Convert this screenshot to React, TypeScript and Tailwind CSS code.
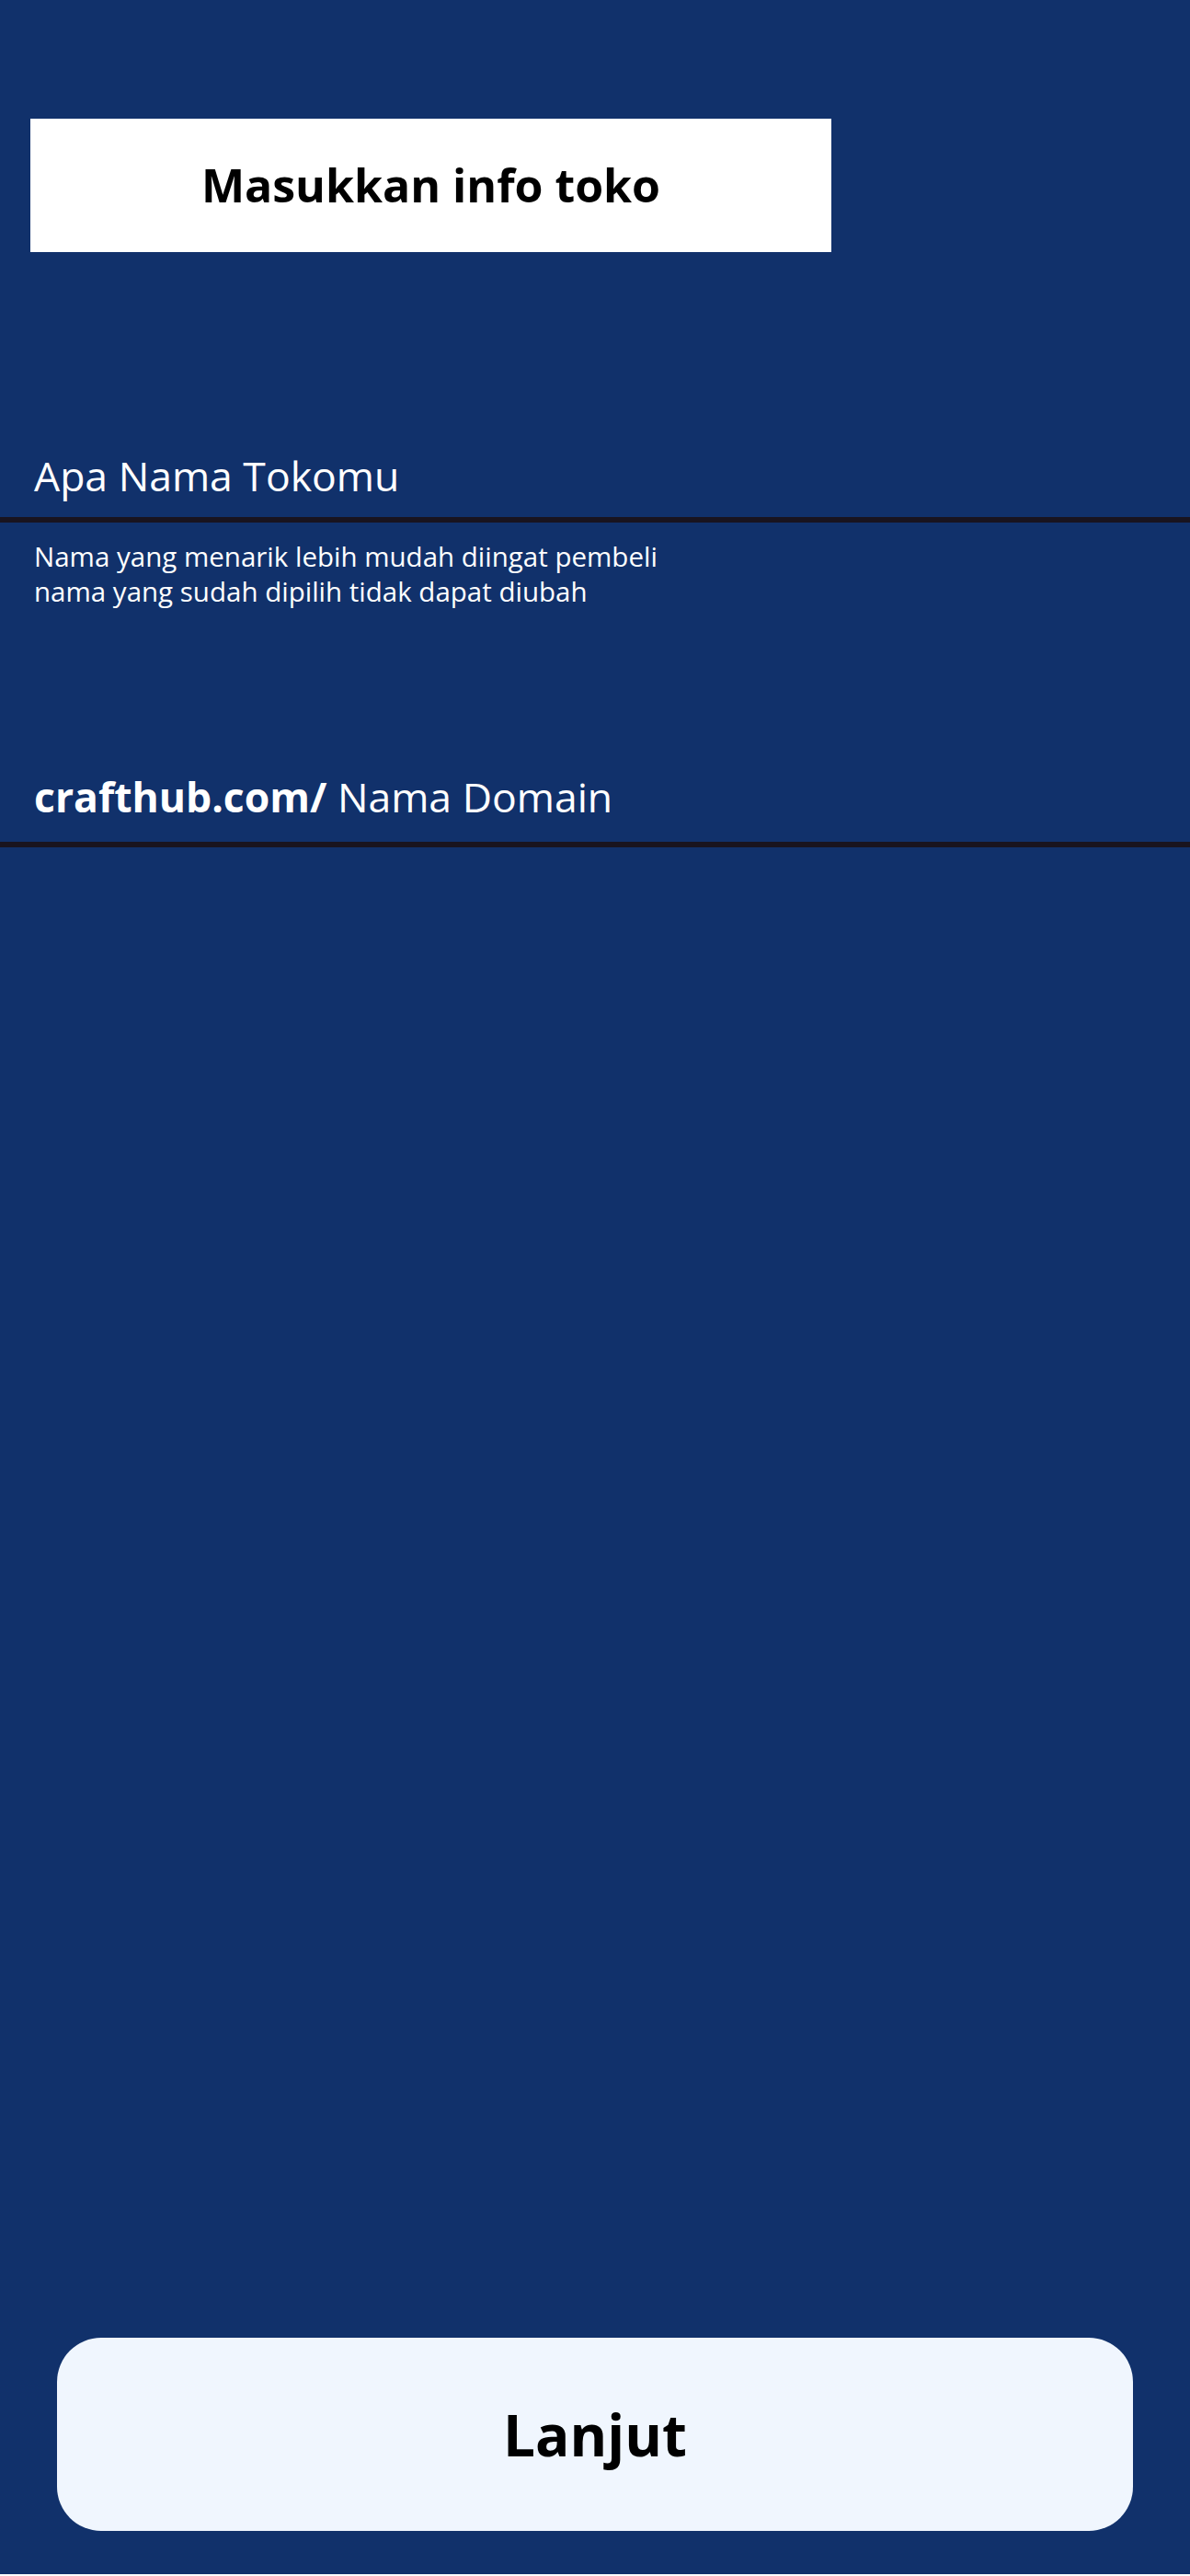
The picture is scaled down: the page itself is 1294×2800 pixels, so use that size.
export default function App() {
  return (
    <div
      className="flex min-h-[2798px] flex-col bg-[#11316b] text-white"
      style={{ fontFamily: '"Open Sans", "Noto Sans", sans-serif' }}
    >
      {/* HEADER */}
      <div className="ml-[33px] mt-[129px] flex h-[145px] w-[871px] items-center justify-center bg-white">
        <h1 className="text-[50px] font-bold text-black">Masukkan info toko</h1>
      </div>

      {/* NAMA TOKO */}
      <div className="mt-[213px] pl-[37px]">
        <p className="text-[44.5px] leading-[60px]">Apa Nama Tokomu</p>
      </div>
      <div className="mt-[15px] h-[6px] w-full bg-[#19141f]" />
      <div className="mt-[18px] pl-[37px] text-[29.5px] leading-[38px]">
        <p>Nama yang menarik lebih mudah diingat pembeli</p>
        <p>nama yang sudah dipilih tidak dapat diubah</p>
      </div>

      {/* DOMAIN */}
      <div className="mt-[174px] pl-[37px]">
        <p className="text-[44.5px] leading-[60px]">
          <span className="font-bold">crafthub.com/</span> Nama Domain
        </p>
      </div>
      <div className="mt-[19px] h-[6px] w-full bg-[#19141f]" />

      {/* BUTTON */}
      <div className="mt-auto px-[62px] pb-[47px]">
        <button className="flex h-[210px] w-full items-center justify-center rounded-[48px] bg-[#f0f6fe] text-[62px] font-bold text-black">
          Lanjut
        </button>
      </div>
    </div>
  );
}
